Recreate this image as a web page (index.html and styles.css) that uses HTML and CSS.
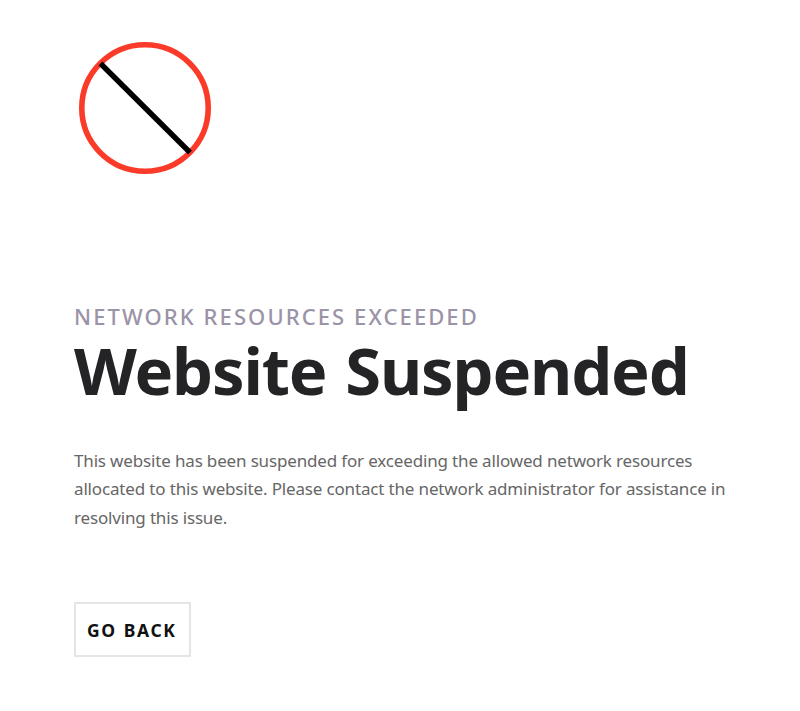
FILE: index.html
```html
<!DOCTYPE html>
<html lang="en">
<head>
<meta charset="utf-8">
<title>Website Suspended</title>
<link rel="stylesheet" href="styles.css">
</head>
<body>
<main class="page">
  <svg class="icon" viewBox="0 0 132 132" width="132" height="132" aria-hidden="true">
    <circle cx="66" cy="66" r="63.2" fill="none" stroke="#fb3b2a" stroke-width="5.6"/>
    <path d="M21.5 21.5 111 110.500" stroke="#000" stroke-width="5.4"/>
  </svg>
  <p class="eyebrow">NETWORK RESOURCES EXCEEDED</p>
  <h1 class="title">Website Suspended</h1>
  <p class="text">This website has been suspended for exceeding the allowed network resources<br>allocated to this website. Please contact the network administrator for assistance in<br>resolving this issue.</p>
  <a class="button">GO BACK</a>
</main>
</body>
</html>
```
FILE: styles.css
```css
body {
  margin: 0;
  background: #fff;
  font-family: "Noto Sans", "Open Sans", sans-serif;
}
.page {
  display: flex;
  flex-direction: column;
  align-items: flex-start;
  padding: 42px 0 0 74px;
  white-space: nowrap;
}
.icon {
  display: block;
  margin-left: 5px;
}
.eyebrow {
  margin: 126px 0 0;
  font-size: 22px;
  line-height: 32px;
  font-weight: 500;
  letter-spacing: 2.08px;
  color: #9b93a7;
}
.title {
  margin: 0;
  font-size: 65px;
  line-height: 76px;
  font-weight: 700;
  letter-spacing: -1.15px;
  word-spacing: 3px;
  color: #242426;
}
.text {
  margin: 39px 0 0;
  font-size: 17px;
  line-height: 28.400px;
  letter-spacing: -0.16px;
  color: #666;
}
.button {
  box-sizing: border-box;
  width: 117px;
  height: 55px;
  margin-top: 69.800px;
  border: 2px solid #e5e5e5;
  padding-left: 11px;
  font-size: 17.500px;
  line-height: 53px;
  font-weight: 700;
  letter-spacing: 1.6px;
  word-spacing: 1px;
  color: #111;
}
```
